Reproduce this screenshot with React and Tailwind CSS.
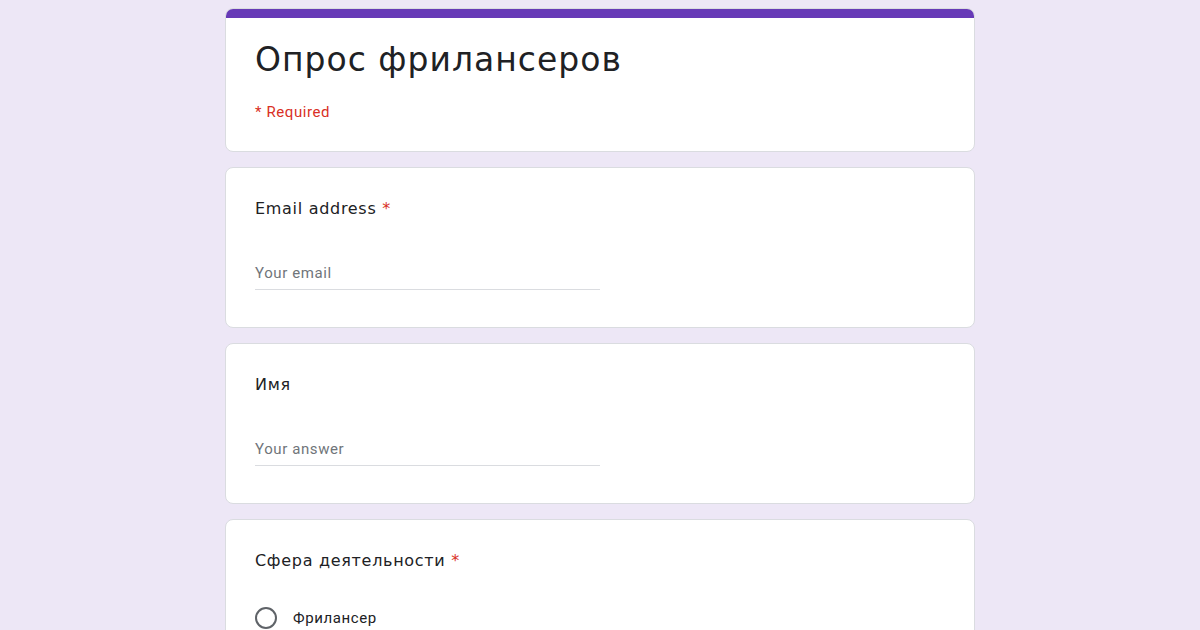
export default function App() {
  const font = { fontFamily: "Roboto, 'Noto Sans', Arial, sans-serif" };
  const heading = "font-['DejaVu_Sans',Roboto,sans-serif]";
  return (
    <div className="w-[1200px] h-[630px] overflow-hidden bg-[#ede7f6] flex flex-col items-center pt-[8px] gap-[15px]" style={font}>
      <div className="w-[750px] rounded-lg bg-white border border-[#dadce0] overflow-hidden shrink-0">
        <div className="h-[10px] bg-[#673ab7] -mx-px -mt-px"></div>
        <div className="px-[29px] pt-[22px] pb-[29px]">
          <div className={`${heading} text-[33px] leading-[40px] text-[#202124] tracking-[1px]`}>Опрос фрилансеров</div>
          <div className="mt-[22px] text-[15px] leading-[20px] text-[#d93025] tracking-[0.6px]">* Required</div>
        </div>
      </div>

      <div className="w-[750px] rounded-lg bg-white border border-[#dadce0] shrink-0 px-[29px] pt-[29px] pb-[37px]">
        <div className={`${heading} text-[16px] leading-[24px] text-[#202124] tracking-[0.7px]`}>
          Email address <span className="text-[#d93025]">*</span>
        </div>
        <div className="mt-[42px] w-[345px] border-b border-[#dadce0] pb-[6px] text-[15px] leading-[20px] text-[#70757a] tracking-[0.6px]">
          Your email
        </div>
      </div>

      <div className="w-[750px] rounded-lg bg-white border border-[#dadce0] shrink-0 px-[29px] pt-[29px] pb-[37px]">
        <div className={`${heading} text-[16px] leading-[24px] text-[#202124] tracking-[0.7px]`}>Имя</div>
        <div className="mt-[42px] w-[345px] border-b border-[#dadce0] pb-[6px] text-[15px] leading-[20px] text-[#70757a] tracking-[0.6px]">
          Your answer
        </div>
      </div>

      <div className="w-[750px] rounded-lg bg-white border border-[#dadce0] shrink-0 px-[29px] pt-[29px] pb-[40px]">
        <div className={`${heading} text-[16px] leading-[24px] text-[#202124] tracking-[0.7px]`}>
          Сфера деятельности <span className="text-[#d93025]">*</span>
        </div>
        <div className="mt-[34px] flex items-center gap-[16px]">
          <div className="w-[22px] h-[22px] rounded-full border-2 border-[#5f6368]"></div>
          <div className="text-[15px] leading-[20px] text-[#202124] tracking-[0.6px]">Фрилансер</div>
        </div>
      </div>
    </div>
  );
}
